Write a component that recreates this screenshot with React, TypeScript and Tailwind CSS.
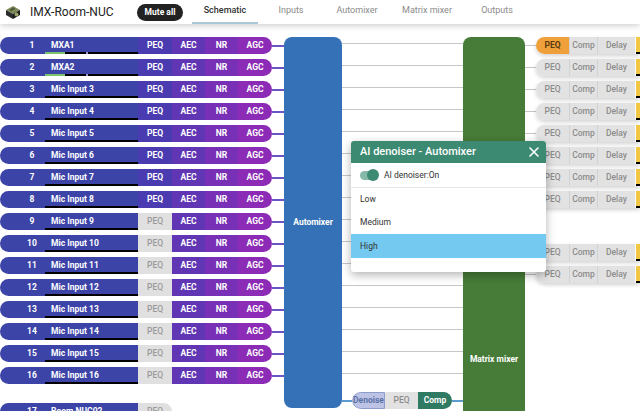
import React from 'react';

type Input = { n: number; name: string; peqOn: boolean; level?: number };

const inputs: Input[] = [
  { n: 1, name: 'MXA1', peqOn: true, level: 20 },
  { n: 2, name: 'MXA2', peqOn: true, level: 20 },
  ...Array.from({ length: 6 }, (_, i) => ({ n: i + 3, name: `Mic Input ${i + 3}`, peqOn: true })),
  ...Array.from({ length: 8 }, (_, i) => ({ n: i + 9, name: `Mic Input ${i + 9}`, peqOn: false })),
];

const tabs = [
  { label: 'Schematic', w: 'w-[66px]', active: true },
  { label: 'Inputs', w: 'w-[66px]' },
  { label: 'Automixer', w: 'w-[66px]' },
  { label: 'Matrix mixer', w: 'w-[74px]' },
  { label: 'Outputs', w: 'w-[66px]' },
];

function Logo() {
  return (
    <svg width="16" height="15" viewBox="0 0 16 15">
      <polygon points="1,5 8,1 15,5 8,9" fill="#7d8a5a" />
      <polygon points="1,5 8,9 8,14 1,10" fill="#2b2b2b" />
      <polygon points="8,9 15,5 15,10 8,14" fill="#1a1a1a" />
      <circle cx="11.5" cy="9.5" r="2" fill="#9aa36a" />
      <rect x="5" y="3.5" width="5" height="2" fill="#4c5636" transform="rotate(-28 7 4.5)" />
    </svg>
  );
}

function Header() {
  return (
    <div className="relative z-10 flex h-[24px] items-center bg-white shadow-[0_2px_6px_rgba(0,0,0,0.18)]">
      <div className="ml-[5px] flex w-[16px] items-center">
        <Logo />
      </div>
      <div className="ml-[9px] w-[77px] whitespace-nowrap text-[12px] leading-none text-[#222]">IMX-Room-NUC</div>
      <div className="ml-[30px] flex h-[17px] w-[46px] items-center justify-center rounded-full bg-[#222] text-[8.5px] font-bold text-white">
        Mute all
      </div>
      <div className="ml-[9px] flex h-full">
        {tabs.map((t) => (
          <div
            key={t.label}
            className={`${t.w} flex h-full items-center justify-center border-b-2 text-[9px] ${
              t.active ? 'border-[#a9c7d6] font-medium text-[#333]' : 'border-transparent text-[#8a8a8a]'
            }`}
          >
            {t.label}
          </div>
        ))}
      </div>
    </div>
  );
}

function InputRow({ row }: { row: Input }) {
  return (
    <div className="flex h-[17px] items-center">
      <div className="flex h-full w-[272px] overflow-hidden rounded-full text-[8.5px] font-bold text-white">
        <div className="relative flex w-[138px] items-center bg-[#3c44a7]">
          <span className="ml-[22px] w-[20px] text-center">{row.n}</span>
          <span className="ml-[9px]">{row.name}</span>
          <div className="absolute bottom-0 left-[45px] right-0 flex h-[2px]">
            {row.level ? (
              <>
                <div className="w-[20px] bg-[#7cc36e]" />
                <div className="w-[21px] bg-black" />
                <div className="w-[2px] bg-[#9a9ad0]" />
                <div className="flex-1 bg-black" />
              </>
            ) : (
              <div className="flex-1 bg-black" />
            )}
          </div>
        </div>
        <div
          className={`flex w-[34px] items-center justify-center ${
            row.peqOn ? 'bg-[#4a3cb0]' : 'bg-[#e0e0e0] font-medium text-[#9a9a9a]'
          }`}
        >
          PEQ
        </div>
        <div className="flex w-[33px] items-center justify-center bg-[#6136b4]">AEC</div>
        <div className="flex w-[33px] items-center justify-center bg-[#7830b6]">NR</div>
        <div className="flex w-[34px] items-center justify-center bg-[#8c2cb6]">AGC</div>
      </div>
      <div className="h-[2px] w-[12px] bg-[#6b54c4]" />
    </div>
  );
}

function OutputRow({ first }: { first?: boolean }) {
  return (
    <div className="flex h-[17px] items-center">
      <div className="h-[1px] w-[11px] bg-[#c4c4c4]" />
      <div className="flex h-full flex-1 overflow-hidden rounded-l-full text-[8.5px] font-medium text-[#8c8c8c] shadow-[0_2px_4px_rgba(0,0,0,0.18)]">
        <div
          className={`flex w-[33px] items-center justify-center ${
            first ? 'bg-[#efa03a] font-bold text-[#5a3a10]' : 'bg-[#e2e2e2]'
          }`}
        >
          PEQ
        </div>
        <div className="flex w-[28px] items-center justify-center border-l border-[#d2d2d2] bg-[#e2e2e2]">Comp</div>
        <div className="flex w-[38px] items-center justify-center border-l border-[#d2d2d2] bg-[#e2e2e2]">Delay</div>
        <div className="w-[1px] bg-white" />
        <div className="relative flex-1 bg-[#f2c744]">
          <div className="absolute bottom-0 left-0 right-0 h-[2px] bg-black" />
        </div>
      </div>
    </div>
  );
}

function DenoiseDialog() {
  return (
    <div className="absolute left-[351px] top-[141px] z-20 w-[195px] overflow-hidden rounded-[3px] bg-white shadow-[0_3px_10px_rgba(0,0,0,0.3)]">
      <div className="flex h-[22px] items-center justify-between bg-[#3d8a72] pl-[9px] pr-[6px]">
        <span className="text-[11px] font-medium text-white">AI denoiser - Automixer</span>
        <svg width="12" height="12" viewBox="0 0 12 12">
          <path d="M2 2 L10 10 M10 2 L2 10" stroke="white" strokeWidth="1.6" strokeLinecap="round" />
        </svg>
      </div>
      <div className="flex h-[25px] items-center border-b border-[#e6e6e6] pl-[9px]">
        <div className="relative h-[9px] w-[18px] rounded-full bg-[#86b9aa]">
          <div className="absolute -top-[1.5px] right-[-1px] h-[12px] w-[12px] rounded-full bg-[#3d8a72]" />
        </div>
        <span className="ml-[6px] text-[8.5px] text-[#333]">AI denoiser:On</span>
      </div>
      <div className="text-[8.5px] text-[#333]">
        <div className="flex h-[23px] items-center pl-[9px]">Low</div>
        <div className="flex h-[23px] items-center pl-[9px]">Medium</div>
        <div className="flex h-[24px] items-center bg-[#73c9ef] pl-[9px]">High</div>
        <div className="h-[14px]" />
      </div>
    </div>
  );
}

export default function App() {
  return (
    <div className="relative h-[411px] w-[640px] overflow-hidden bg-white font-['Roboto',sans-serif]">
      <Header />
      <div className="flex items-start pt-[13px]">
        <div className="flex w-[284px] flex-col gap-[5px]">
          {inputs.map((r) => (
            <InputRow key={r.n} row={r} />
          ))}
          <div className="mt-[14px] flex h-[17px] w-[172px] overflow-hidden rounded-full text-[8.5px] font-bold text-white">
            <div className="flex w-[138px] items-center bg-[#3c44a7]">
              <span className="ml-[22px] w-[20px] text-center">17</span>
              <span className="ml-[9px]">Room NUC02</span>
            </div>
            <div className="flex w-[34px] items-center justify-center bg-[#e0e0e0] font-medium text-[#9a9a9a]">PEQ</div>
          </div>
        </div>

        <div className="flex h-[371px] w-[58px] items-center justify-center rounded-[8px] bg-[#3471b6] text-[8.5px] font-bold text-white">
          Automixer
        </div>

        <div className="flex w-[121px] flex-col">
          {inputs.map((r) => (
            <div key={r.n} className="h-[22px] pt-[6px]">
              <div className="h-[1px] bg-[#c6c6c6]" />
            </div>
          ))}
          <div className="mt-[3px] flex h-[17px] items-center">
            <div className="h-[2px] w-[10px] bg-[#5b9bd0]" />
            <div className="flex h-full w-[100px] overflow-hidden rounded-full text-[8.5px] font-bold">
              <div className="flex w-[33px] items-center justify-center rounded-l-full border border-[#8e9ccc] bg-[#bcc3e4] text-[#5b72a8]">
                Denoise
              </div>
              <div className="flex w-[33px] items-center justify-center bg-[#e2e2e2] font-medium text-[#8c8c8c]">PEQ</div>
              <div className="flex w-[34px] items-center justify-center bg-[#2f7a62] text-white">Comp</div>
            </div>
            <div className="h-[2px] w-[11px] bg-[#5b9bd0]" />
          </div>
        </div>

        <div className="flex h-[644px] w-[62px] items-center justify-center rounded-t-[8px] bg-[#477b38] text-[8.5px] font-bold text-white">
          Matrix mixer
        </div>

        <div className="flex flex-1 flex-col gap-[5px]">
          {Array.from({ length: 8 }, (_, i) => (
            <OutputRow key={i} first={i === 0} />
          ))}
          <div className="mt-[31px] flex flex-col gap-[5px]">
            <OutputRow />
            <OutputRow />
          </div>
        </div>
      </div>
      <DenoiseDialog />
    </div>
  );
}
